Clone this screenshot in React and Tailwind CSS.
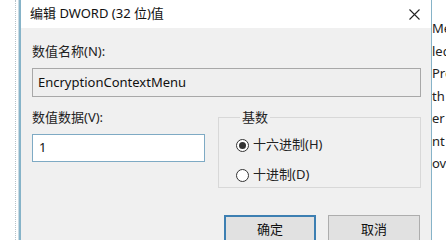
const FONT = { fontFamily: '"Noto Sans", "Noto Sans CJK SC", sans-serif' };

function Radio({ checked, label }) {
  return (
    <div className="flex items-center gap-[4px] h-[20px]">
      <span className="flex items-center justify-center w-[13px] h-[13px] rounded-full border border-[#333] bg-white">
        {checked && <span className="w-[7px] h-[7px] rounded-full bg-[#333]" />}
      </span>
      <span className="text-[13px] text-[#222]">{label}</span>
    </div>
  );
}

export default function App() {
  const sideText = ['Me', 'led', 'Pre', 'th', 'er', 'nt', 'ov'];

  return (
    <div className="flex w-[446px] h-[240px] overflow-hidden bg-white" style={FONT}>
      <div className="w-[19px] shrink-0 flex">
        <div className="w-[15px]" />
        <div className="w-px border-l border-dotted border-[#b8c4cc]" />
        <div className="w-[2px]" />
        <div className="w-px bg-[#c9dbe4]" />
      </div>

      <div className="w-[413px] shrink-0 flex flex-col border-l-2 border-r border-[#86b3c8]">
        <div className="h-[28px] shrink-0 bg-white flex items-center justify-between pl-[9px] pr-[11px]">
          <span className="text-[13px] text-[#111]">编辑 DWORD (32 位)值</span>
          <svg width="11" height="11" viewBox="0 0 11 11" className="mt-[1px]">
            <path d="M0.5 0.5 L10.5 10.5 M10.5 0.5 L0.5 10.5" stroke="#222" strokeWidth="1.1" />
          </svg>
        </div>

        <div className="flex-1 bg-[#f0f0f0] pl-[11px] pr-[10px] pt-[14px]">
          <div className="text-[13px] text-[#222] leading-[18px]">数值名称(N):</div>
          <div className="mt-[8px] h-[29px] border border-[#a8a8a8] bg-[#efefef] flex items-center pl-[5px] text-[13px] text-[#111]">
            EncryptionContextMenu
          </div>

          <div className="flex mt-[11px]">
            <div className="w-[173px]">
              <div className="text-[13px] text-[#222] leading-[18px]">数值数据(V):</div>
              <div className="mt-[8px] h-[28px] border border-[#7eaac4] bg-white flex items-center pl-[6px] text-[13px] text-[#111]">
                1
              </div>
            </div>

            <fieldset className="ml-[13px] flex-1 border border-[#d8d8d8] mt-[1px] h-[79px] pl-[17px] pt-[10px]">
              <legend className="ml-[4px] px-[2px] text-[13px] text-[#222] leading-[16px]">基数</legend>
              <Radio checked label="十六进制(H)" />
              <div className="h-[10px]" />
              <Radio label="十进制(D)" />
            </fieldset>
          </div>

          <div className="flex mt-[27px] ml-[192px] gap-[12px]">
            <div className="w-[92px] h-[30px] border-2 border-[#3d7fb2] bg-[#e1e1e1] flex items-center justify-center text-[13px] text-[#111]">
              确定
            </div>
            <div className="w-[92px] h-[30px] border border-[#adadad] bg-[#e1e1e1] flex items-center justify-center text-[13px] text-[#111]">
              取消
            </div>
          </div>
        </div>
      </div>

      <div className="flex-1 overflow-hidden pt-[19px]">
        {sideText.map((t) => (
          <div key={t} className="h-[22.5px] text-[13px] leading-[18px] text-[#222] whitespace-nowrap">
            {t}
          </div>
        ))}
      </div>
    </div>
  );
}
